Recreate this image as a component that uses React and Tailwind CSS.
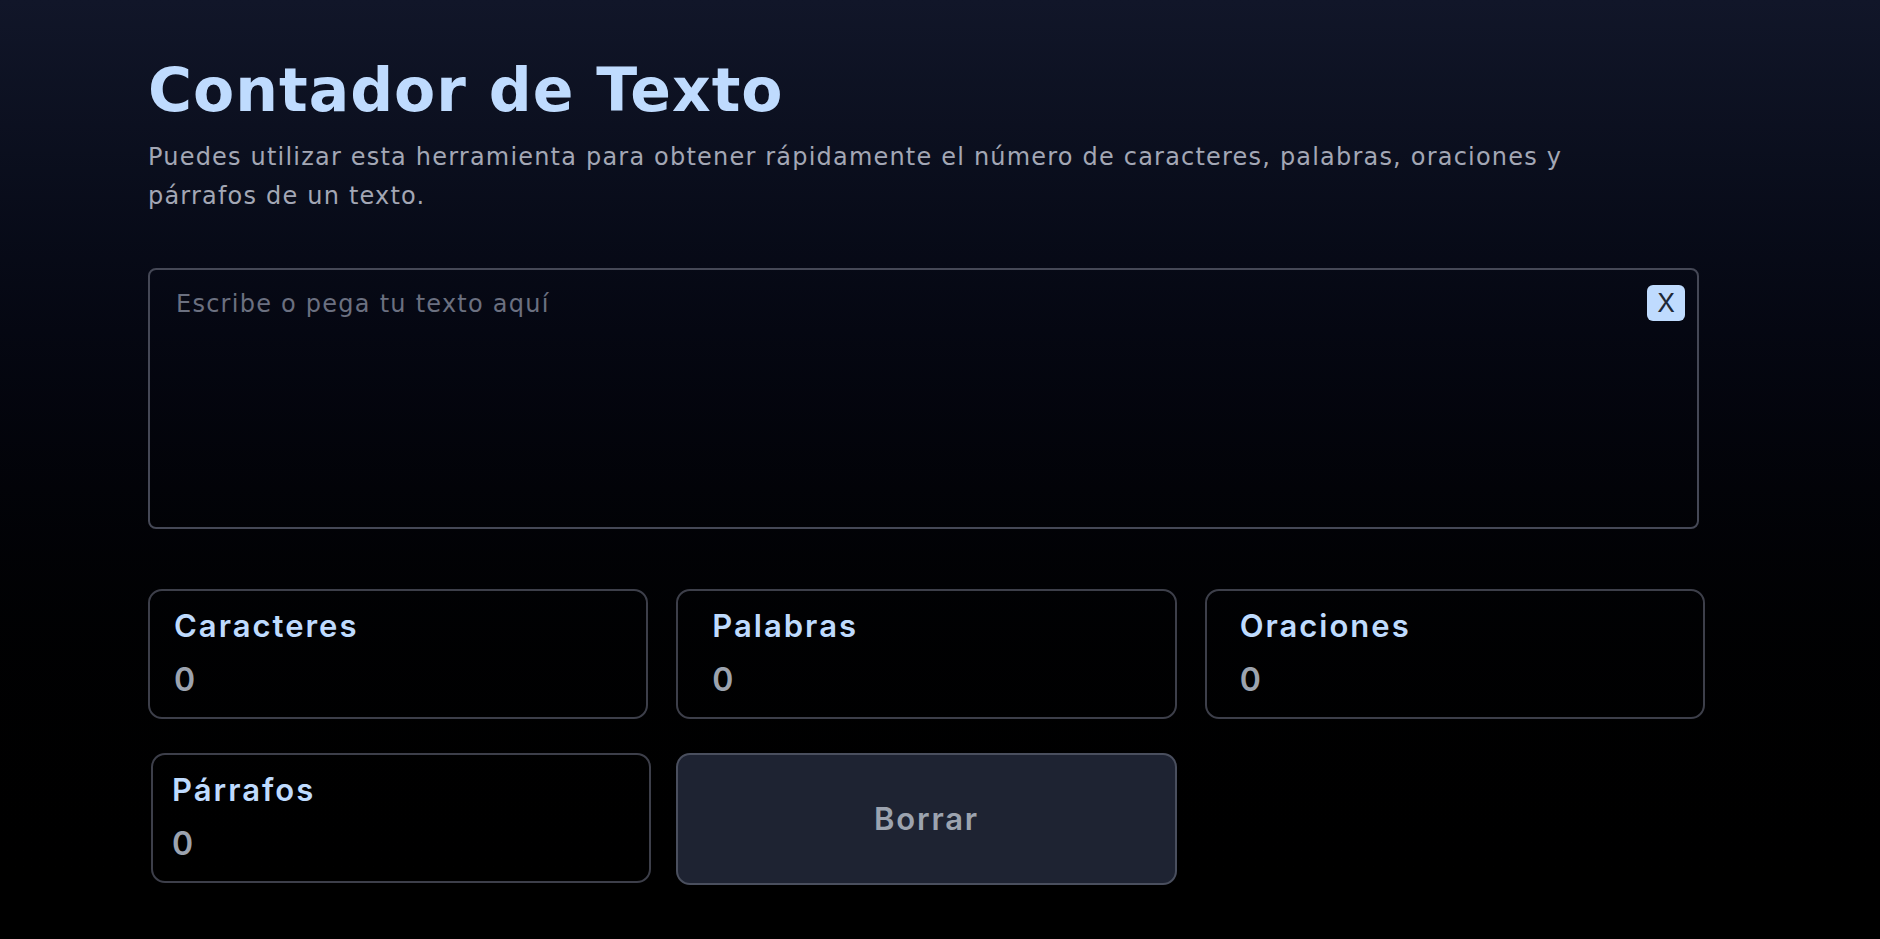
import { useState } from 'react';

const font = { fontFamily: '"DejaVu Sans", Inter, sans-serif' };
const labelFont = { fontFamily: 'Inter, "DejaVu Sans", sans-serif' };

function StatCard({ label, value, padClass }) {
  return (
    <div className={`h-[130px] rounded-[14px] border-2 border-[#3d3f4a] pt-[15px] ${padClass}`} style={labelFont}>
      <p className="text-[31px] font-semibold leading-[40px] tracking-[2px] text-[#bfdbfe]">{label}</p>
      <p className="mt-[14px] text-[32px] font-semibold leading-[40px] text-[#9ca3af]">{value}</p>
    </div>
  );
}

export default function App() {
  const [text, setText] = useState('');

  const characters = text.length;
  const words = text.trim() ? text.trim().split(/\s+/).length : 0;
  const sentences = text.split(/[.!?]+/).filter((s) => s.trim()).length;
  const paragraphs = text.split(/\n+/).filter((p) => p.trim()).length;

  return (
    <div className="min-h-[939px] bg-gradient-to-b from-[#111629] to-black" style={font}>
      <div className="ml-[148px] w-[1557px] pt-[60px]">
        {/* Header */}
        <h1 className="text-[60px] font-bold leading-[60px] tracking-[1px] text-[#bfdbfe]">
          Contador de Texto
        </h1>
        <p className="mt-[18px] text-[24px] leading-[39px] tracking-[1.2px] text-[#a3a7b5]">
          Puedes utilizar esta herramienta para obtener rápidamente el número de caracteres, palabras, oraciones y
          <br />
          párrafos de un texto.
        </p>

        {/* Text input */}
        <div className="relative mt-[52px] w-[1551px]">
          <textarea
            value={text}
            onChange={(e) => setText(e.target.value)}
            placeholder="Escribe o pega tu texto aquí"
            className="block h-[261px] w-full resize-none rounded-lg border-2 border-[#454856] bg-transparent px-[26px] py-[16px] text-[24px] leading-[36px] tracking-[1.25px] text-[#d1d5db] placeholder:text-[#6b7080] outline-none"
          />
          <button
            onClick={() => setText('')}
            className="absolute right-[14px] top-[17px] flex h-[36px] w-[38px] items-center justify-center rounded-md bg-[#bfdbfe] text-[26px] leading-none text-[#1f2937]"
            style={labelFont}
          >
            X
          </button>
        </div>

        {/* Stats */}
        <div className="mt-[60px] grid grid-cols-3 gap-x-[28px] gap-y-[34px]">
          <StatCard label="Caracteres" value={characters} padClass="pl-[24px]" />
          <StatCard label="Palabras" value={words} padClass="pl-[34px]" />
          <StatCard label="Oraciones" value={sentences} padClass="pl-[33px]" />
          <div className="ml-[3px] mr-[-3px]">
            <StatCard label="Párrafos" value={paragraphs} padClass="pl-[19px]" />
          </div>
          <button
            onClick={() => setText('')}
            className="h-[132px] rounded-[14px] border-2 border-[#4a4f5e] bg-[#1e2332] text-[31px] font-semibold tracking-[1.8px] text-[#9ca3af]"
            style={labelFont}
          >
            Borrar
          </button>
        </div>
      </div>
    </div>
  );
}
